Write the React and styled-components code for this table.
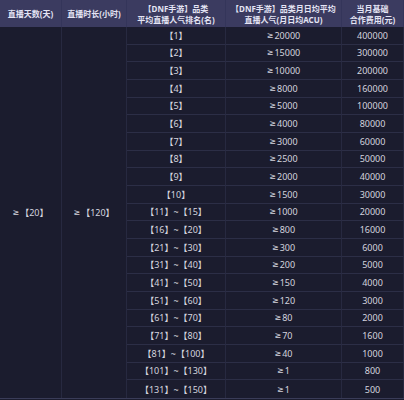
import styled, { createGlobalStyle } from "styled-components";

const GlobalStyle = createGlobalStyle`
    html, body {
        margin: 0;
        padding: 0;
        background: #1b1c2e;
    }
    body {
        font-family: "Noto Sans", "DejaVu Sans", "Noto Sans CJK SC", sans-serif;
    }
`;

const Table = styled.div`
    display: grid;
    grid-template-columns: 62px 65px 99px 116px 62px;
    grid-template-rows: 27px repeat(21, 1fr);
    width: 404px;
    height: 399px;
    box-sizing: border-box;
    background: #1b1c2e;
    border-bottom: 1px solid #3a3c58;
`;

const HeadCell = styled.div`
    display: flex;
    align-items: center;
    justify-content: center;
    text-align: center;
    background: #3b3b60;
    color: #e4e4f4;
    font-size: 8px;
    font-weight: 700;
    line-height: 11px;
    white-space: pre;
    border-right: 1px solid #34355a;
    box-sizing: border-box;
`;

const Cell = styled.div`
    display: flex;
    align-items: center;
    justify-content: center;
    color: #d4d4de;
    font-size: 9px;
    white-space: nowrap;
    border-right: 1px solid #272940;
    border-bottom: ${(p) => (p.last ? "none" : "1px solid #2c2e46")};
    box-sizing: border-box;
    ${(p) => (p.span ? `grid-row: 2 / span ${p.span};` : "")}
`;

const Ge = styled.span`
    font-family: "DejaVu Sans", sans-serif;
    font-size: 8px;
    margin-right: 1px;
`;

const rows = [
    ["【1】", "20000", "400000"],
    ["【2】", "15000", "300000"],
    ["【3】", "10000", "200000"],
    ["【4】", "8000", "160000"],
    ["【5】", "5000", "100000"],
    ["【6】", "4000", "80000"],
    ["【7】", "3000", "60000"],
    ["【8】", "2500", "50000"],
    ["【9】", "2000", "40000"],
    ["【10】", "1500", "30000"],
    ["【11】~【15】", "1000", "20000"],
    ["【16】~【20】", "800", "16000"],
    ["【21】~【30】", "300", "6000"],
    ["【31】~【40】", "200", "5000"],
    ["【41】~【50】", "150", "4000"],
    ["【51】~【60】", "120", "3000"],
    ["【61】~【70】", "80", "2000"],
    ["【71】~【80】", "70", "1600"],
    ["【81】~【100】", "40", "1000"],
    ["【101】~【130】", "1", "800"],
    ["【131】~【150】", "1", "500"],
];

export default function App() {
    return (
        <>
            <GlobalStyle />
            <Table>
                <HeadCell>直播天数(天)</HeadCell>
                <HeadCell>直播时长(小时)</HeadCell>
                <HeadCell>{"【DNF手游】品类\n平均直播人气排名(名)"}</HeadCell>
                <HeadCell>{"【DNF手游】品类月日均平均\n直播人气(月日均ACU)"}</HeadCell>
                <HeadCell>{"当月基础\n合作费用(元)"}</HeadCell>

                <Cell span={rows.length} last style={{ gridColumn: 1 }}>
                    <Ge>≥</Ge>【20】
                </Cell>
                <Cell span={rows.length} last style={{ gridColumn: 2 }}>
                    <Ge>≥</Ge>【120】
                </Cell>

                {rows.map(([rank, acu, fee], i) => {
                    const last = i === rows.length - 1;
                    return [
                        <Cell key={"r" + i} last={last} style={{ gridColumn: 3 }}>
                            {rank}
                        </Cell>,
                        <Cell key={"a" + i} last={last} style={{ gridColumn: 4 }}>
                            <Ge>≥</Ge>
                            {acu}
                        </Cell>,
                        <Cell key={"f" + i} last={last} style={{ gridColumn: 5 }}>
                            {fee}
                        </Cell>,
                    ];
                })}
            </Table>
        </>
    );
}
